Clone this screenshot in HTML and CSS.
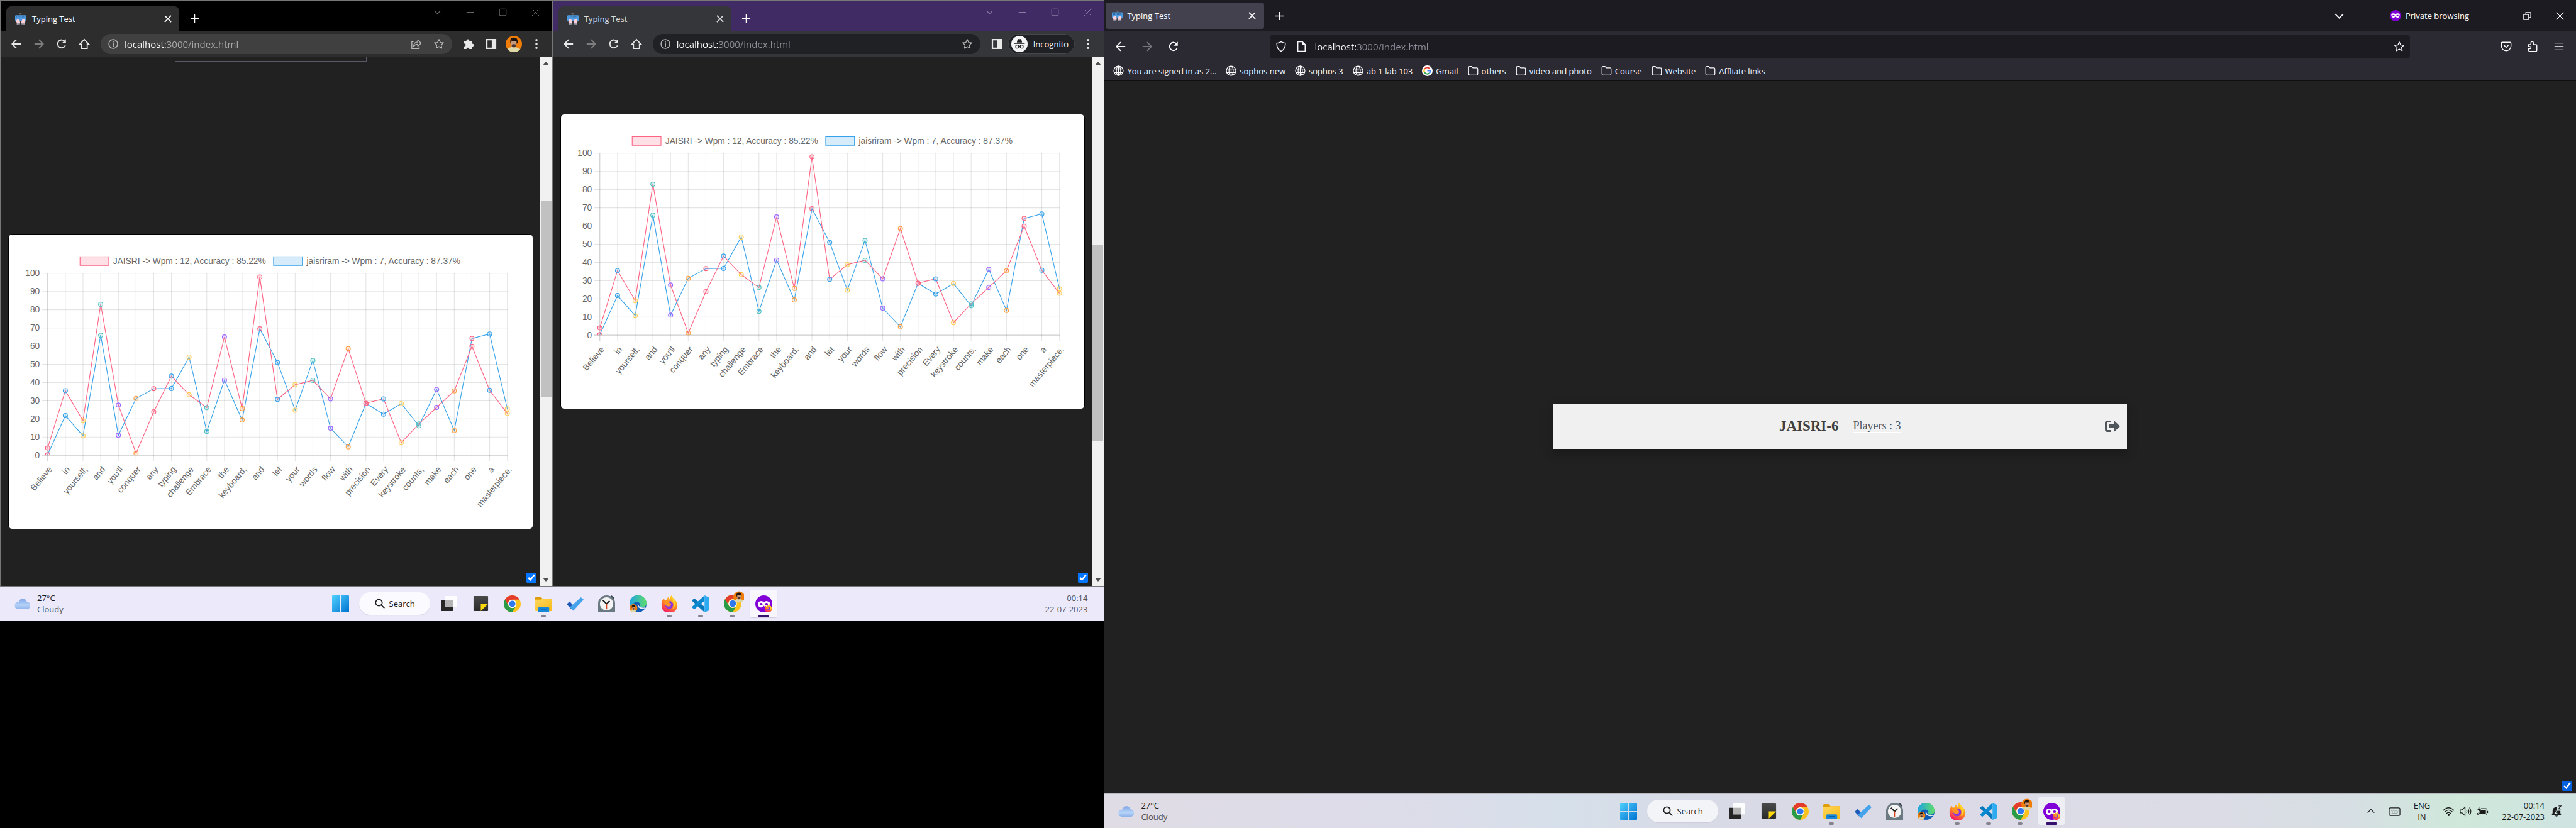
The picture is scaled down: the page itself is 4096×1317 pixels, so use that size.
FILE: index.html
```html
<!DOCTYPE html>
<html lang="en">
<head>
<meta charset="utf-8">
<title>Typing Test</title>
<link rel="stylesheet" href="styles.css">
</head>
<body>
<svg class="sprite" aria-hidden="true">
  <defs>
    <linearGradient id="g-cloud" x1="0" y1="0" x2="0" y2="1"><stop offset="0" stop-color="#7fa6e8"/><stop offset=".6" stop-color="#b5d3f8"/><stop offset="1" stop-color="#8fb2ea"/></linearGradient>
    <linearGradient id="g-win" x1="0" y1="0" x2="1" y2="1"><stop offset="0" stop-color="#4fd0ff"/><stop offset="1" stop-color="#0072d0"/></linearGradient>
    <linearGradient id="g-edge" x1="0" y1="0" x2="1" y2="0"><stop offset="0" stop-color="#1fa3e4"/><stop offset="1" stop-color="#5fdc6b"/></linearGradient>
    <linearGradient id="g-fox" x1=".8" y1="0" x2=".3" y2="1"><stop offset="0" stop-color="#ffe226"/><stop offset=".5" stop-color="#ff8a1e"/><stop offset="1" stop-color="#f5156c"/></linearGradient>
    <linearGradient id="g-folder" x1="0" y1="0" x2="1" y2="1"><stop offset="0" stop-color="#ffd75e"/><stop offset="1" stop-color="#fbb917"/></linearGradient>
    <linearGradient id="g-dark" x1="0" y1="0" x2="0" y2="1"><stop offset="0" stop-color="#4a4a4a"/><stop offset="1" stop-color="#2a2a2a"/></linearGradient>
  </defs>
  <symbol id="i-favicon" viewBox="0 0 20 20"><path d="M10 4V2.500q0-1 1-1h2M7 0.800h4" fill="none" stroke="#777" stroke-width="1"/><rect x="0" y="3.500" width="20" height="11" rx="1.500" fill="#4f9be0"/><path d="M2 5.500h16M2 8h16M2 10.500h16" stroke="#23588f" stroke-width="1.200" stroke-dasharray="1.500 1"/><path d="M3 20v-3l-1.500-3 2.500-4 1.500 1 2 .5 1.500 4-1 4.500zM17 20v-3l1.500-3-2.500-4-1.500 1-2 .5-1.500 4 1 4.500z" fill="#fbd0d8"/><path d="M3.500 18h4.500v2H3.500zM12 18h4.500v2H12z" fill="#7d8790"/></symbol>
  <symbol id="i-close" viewBox="0 0 16 16"><path d="M3.500 3.500l9 9M12.500 3.500l-9 9" stroke="currentColor" stroke-width="1.500" fill="none"/></symbol>
  <symbol id="i-plus" viewBox="0 0 16 16"><path d="M8 1v14M1 8h14" stroke="currentColor" stroke-width="1.600"/></symbol>
  <symbol id="i-down" viewBox="0 0 16 16"><path d="M2 5l6 6 6-6" fill="none" stroke="currentColor" stroke-width="1.600"/></symbol>
  <symbol id="i-up" viewBox="0 0 16 16"><path d="M2 11l6-6 6 6" fill="none" stroke="currentColor" stroke-width="1.600"/></symbol>
  <symbol id="i-min" viewBox="0 0 16 16"><path d="M1 8h14" stroke="currentColor" stroke-width="1.300"/></symbol>
  <symbol id="i-max" viewBox="0 0 16 16"><rect x="1.500" y="1.500" width="13" height="13" rx="2" fill="none" stroke="currentColor" stroke-width="1.300"/></symbol>
  <symbol id="i-restore" viewBox="0 0 16 16"><path d="M2 5.500h8.500V14H2zM5.500 5.500V2H14v8.500h-3.500" fill="none" stroke="currentColor" stroke-width="1.400"/></symbol>
  <symbol id="i-x" viewBox="0 0 16 16"><path d="M1 1l14 14M15 1L1 15" stroke="currentColor" stroke-width="1.200"/></symbol>
  <symbol id="i-back" viewBox="0 0 20 20"><path d="M18 10H3M10 2.500L2.500 10l7.500 7.500" fill="none" stroke="currentColor" stroke-width="2"/></symbol>
  <symbol id="i-fwd" viewBox="0 0 20 20"><path d="M2 10h15M10 2.500l7.500 7.500-7.500 7.500" fill="none" stroke="currentColor" stroke-width="2"/></symbol>
  <symbol id="i-reload" viewBox="0 0 20 20"><path d="M16.500 12.500A7 7 0 1 1 15.500 5.500" fill="none" stroke="currentColor" stroke-width="2.100"/><path d="M17.500 1.500v7h-7z" fill="currentColor"/></symbol>
  <symbol id="i-home" viewBox="0 0 20 20"><path d="M2 10.500L10 2l8 8.500h-2.800V18H4.800v-7.500z" fill="none" stroke="currentColor" stroke-width="1.900"/></symbol>
  <symbol id="i-info" viewBox="0 0 20 20"><circle cx="10" cy="10" r="7.700" fill="none" stroke="currentColor" stroke-width="1.600"/><path d="M10 9v5.500M10 5.300v2" stroke="currentColor" stroke-width="2"/></symbol>
  <symbol id="i-share" viewBox="0 0 20 20"><path d="M5 6H2v12h13v-4" fill="none" stroke="currentColor" stroke-width="1.500"/><path d="M5 14c.5-5 3-7.500 7.500-7.500V3l6 5.500-6 5.500v-3.500C9 10.500 7 11.500 5 14z" fill="none" stroke="currentColor" stroke-width="1.500" stroke-linejoin="round"/></symbol>
  <symbol id="i-star" viewBox="0 0 20 20"><path d="M10 2l2.400 5.300 5.800.6-4.300 3.900 1.200 5.700L10 14.600l-5.100 2.900 1.200-5.700-4.300-3.900 5.800-.6z" fill="none" stroke="currentColor" stroke-width="1.500" stroke-linejoin="round"/></symbol>
  <symbol id="i-puzzle" viewBox="0 0 20 20"><path d="M1.500 5h4.800a2.600 2.600 0 1 1 5 0H16v4.600a2.600 2.600 0 1 1 0 5V19h-4.700a2.500 2.500 0 1 0-5 0H1.500v-5a2.500 2.500 0 1 0 0-4.500z" fill="currentColor"/></symbol>
  <symbol id="i-panel" viewBox="0 0 20 20"><path d="M1 1h18v18H1zM3.500 3.500v13H11v-13z" fill="currentColor" fill-rule="evenodd"/></symbol>
  <symbol id="i-avatar" viewBox="0 0 28 28"><circle cx="14" cy="14" r="14" fill="#ef7d08"/><path d="M3 22.500q4-3 7.500-3.500h6q5 1 8.500 4A14 14 0 0 1 3 22.500z" fill="#ddd8a8"/><path d="M9.500 9h9v7q-1.500 5-4.500 5t-4.500-5z" fill="#c79a80"/><path d="M8 12Q6.500 3 14 3t6.500 9l-1.500 2-.5-5q-5 1-8.500-1l-.5 6z" fill="#191412"/><path d="M10.500 15q3.500-1.500 7 0v3q-3.500 3-7 0z" fill="#4b352c"/></symbol>
  <symbol id="i-dots" viewBox="0 0 20 20"><g fill="currentColor"><circle cx="10" cy="3" r="2"/><circle cx="10" cy="10" r="2"/><circle cx="10" cy="17" r="2"/></g></symbol>
  <symbol id="i-incog" viewBox="0 0 28 28"><circle cx="14" cy="14" r="14" fill="#f4f4f6"/><path d="M9.500 11.500l1.500-6q3 .8 6 0l1.500 6z" fill="#202124"/><path d="M5 13h18" stroke="#202124" stroke-width="1.600"/><g fill="none" stroke="#202124" stroke-width="1.300"><circle cx="10.200" cy="18.500" r="2.700"/><circle cx="17.800" cy="18.500" r="2.700"/><path d="M12.900 18q1.100-.8 2.200 0"/></g></symbol>
  <symbol id="i-shield" viewBox="0 0 20 20"><path d="M10 1.500q3.500 2.500 7.500 2.500.5 10-7.500 14.500Q2 14 2.500 4 6.500 4 10 1.500z" fill="none" stroke="currentColor" stroke-width="1.600"/></symbol>
  <symbol id="i-page" viewBox="0 0 20 20"><path d="M4 1.500h8l5 5v12H4z" fill="none" stroke="currentColor" stroke-width="1.800" stroke-linejoin="round"/><path d="M11.500 1.500V7H17z" fill="currentColor"/></symbol>
  <symbol id="i-globe" viewBox="0 0 20 20"><g fill="none" stroke="currentColor" stroke-width="1.500"><circle cx="10" cy="10" r="8.800"/><ellipse cx="10" cy="10" rx="4" ry="8.800"/><path d="M2 6.500h16M2 13.500h16M10 1v18"/></g></symbol>
  <symbol id="i-google" viewBox="0 0 20 20"><circle cx="10" cy="10" r="10" fill="#fff"/><g fill="none" stroke-width="2.600"><path d="M14.200 5.800A6 6 0 0 0 4.800 7" stroke="#ea4335"/><path d="M4.800 7a6 6 0 0 0 0 6" stroke="#fbbc05"/><path d="M4.800 13a6 6 0 0 0 9 1.600" stroke="#34a853"/><path d="M13.800 14.600A6 6 0 0 0 16 10h-6" stroke="#4285f4"/></g></symbol>
  <symbol id="i-folder" viewBox="0 0 20 20"><path d="M1.500 4q0-2 2-2h3.500l2.500 2.500h7q2 0 2 2V16q0 2-2 2h-13q-2 0-2-2z" fill="none" stroke="currentColor" stroke-width="1.500"/></symbol>
  <symbol id="i-pocket" viewBox="0 0 20 20"><path d="M3 2.500h14q1.500 0 1.500 1.500v5a8.500 8.500 0 0 1-17 0V4q0-1.500 1.500-1.500z" fill="none" stroke="currentColor" stroke-width="1.600"/><path d="M6 7.500l4 4 4-4" fill="none" stroke="currentColor" stroke-width="1.700"/></symbol>
  <symbol id="i-ext" viewBox="0 0 20 20"><path d="M3 6.500h4V3.500a2.200 2.200 0 0 1 4.400 0v3H16q1.500 0 1.500 1.500v9q0 1.500-1.500 1.500H4.500Q3 18.500 3 17v-3h2a2 2 0 0 0 0-4H3z" fill="none" stroke="currentColor" stroke-width="1.600"/></symbol>
  <symbol id="i-menu" viewBox="0 0 20 20"><path d="M2 4h16M2 10h16M2 16h16" stroke="currentColor" stroke-width="1.600"/></symbol>
  <symbol id="i-mask" viewBox="0 0 20 20"><circle cx="10" cy="10" r="10" fill="#8000d7"/><path d="M2.500 7.500Q6 4.500 10 7q4-2.500 7.500.5 0 6-4 6-2 0-3.500-2-1.500 2-3.500 2-4 0-4-6z" fill="#fff"/><ellipse cx="6.500" cy="9.700" rx="1.900" ry="1.200" fill="#8000d7"/><ellipse cx="13.500" cy="9.700" rx="1.900" ry="1.200" fill="#8000d7"/></symbol>
  <symbol id="i-exit" viewBox="0 0 24 18"><path d="M9 1.500H4Q1.500 1.500 1.500 4v10q0 2.500 2.500 2.500h5" fill="none" stroke="currentColor" stroke-width="3"/><path d="M7 6h7V1q0-1 1-.5l8.300 7.800q.7.700 0 1.400L15 17.500q-1 .5-1-.5v-5H7z" fill="currentColor"/></symbol>
  <symbol id="i-cloud" viewBox="0 0 28 18"><path d="M6 18a6 6 0 0 1-.5-11.500Q7 7 8 6A6.500 6.500 0 0 1 20.500 6 6.200 6.200 0 0 1 22 18z" fill="url(#g-cloud)"/></symbol>
  <symbol id="i-win" viewBox="0 0 27 27"><path d="M1 0h12v13H0V1q0-1 1-1zM14 0h12q1 0 1 1v12H14zM0 14h13v13H1q-1 0-1-1zM14 14h13v12q0 1-1 1H14z" fill="url(#g-win)"/></symbol>
  <symbol id="i-search" viewBox="0 0 16 16"><circle cx="6.500" cy="6.500" r="5.200" fill="none" stroke="currentColor" stroke-width="1.700"/><path d="M10.300 10.300l5 5" stroke="currentColor" stroke-width="1.900"/></symbol>
  <symbol id="i-task" viewBox="0 0 28 28"><rect x="0" y="8" width="20" height="18" rx="1" fill="#262626"/><rect x="7" y="1" width="20" height="18" rx="1" fill="#fff" opacity=".9"/><path d="M7 8h13v11H7z" fill="#b4b4b4"/></symbol>
  <symbol id="i-note" viewBox="0 0 28 28"><rect x="2" y="1" width="24" height="25" rx="1" fill="url(#g-dark)"/><path d="M14 26V14h12z" fill="#ffd90a"/></symbol>
  <symbol id="i-chrome" viewBox="0 0 28 28"><circle cx="14" cy="14" r="14" fill="#fcc31e"/><path d="M1.900 7A14 14 0 0 1 26.100 7H14a7 7 0 0 0-6 10.500z" fill="#e33b2e"/><path d="M1.900 7A14 14 0 0 0 14 28l6-10.500a7 7 0 0 1-12 0z" fill="#2a9c48"/><circle cx="14" cy="14" r="6.800" fill="#fff"/><circle cx="14" cy="14" r="5.300" fill="#2d78ee"/></symbol>
  <symbol id="i-explorer" viewBox="0 0 28 28"><path d="M0 4q0-2 2-2h7l3 3.500h14q2 0 2 2V12H0z" fill="#df9d0c"/><path d="M0 7h9l3-1.500h15q1 0 1 1V24q0 2-2 2H2q-2 0-2-2z" fill="url(#g-folder)"/><path d="M5 27v-6q0-2 2-2h14q2 0 2 2v6z" fill="#1787d8"/><path d="M9 22.500h10" stroke="#0b5ca8" stroke-width="1.500"/></symbol>
  <symbol id="i-todo" viewBox="0 0 28 28"><path d="M0 14.500l5-4.500 6.500 7-4 5.500z" fill="#1c59b8"/><path d="M5.500 19.500L23.500 3l4.500 4-17 18.500z" fill="#45a3ec"/></symbol>
  <symbol id="i-clock" viewBox="0 0 28 28"><path d="M22 0l5 4-2 3-5-4z" fill="#37424b"/><path d="M0 28V13a14 13 0 0 1 28 0v15z" fill="#6b7982"/><circle cx="14" cy="14" r="11" fill="#f4f4f4"/><path d="M8 8l6 6 5-5" fill="none" stroke="#222" stroke-width="2.200"/><path d="M14 14v9" stroke="#d9431f" stroke-width="1.700"/></symbol>
  <symbol id="i-edge" viewBox="0 0 28 28"><circle cx="14" cy="14" r="14" fill="#0f5cb5"/><path d="M0 14A14 14 0 0 1 28 13q0 6-7 6.500-5 0-4-3 1-5-4.500-5.500Q5 11 3 20 0 17 0 14z" fill="url(#g-edge)"/><path d="M14 12.500q-2 4 1 7.500 4 3 10 1.500l1-1.500q-5 .5-8-.5-4-2-4-7z" fill="#ece9fb"/><use href="#i-avatar" x="0" y="14" width="13" height="14"/></symbol>
  <symbol id="i-fox" viewBox="0 0 28 28"><path d="M17 0q2 4 5 6.500 6 5 5 11A13 12 0 0 1 1 17Q0 9 5 5l1 3 3-.5Q10 4 12 2.500L14 7q1-5 3-7z" fill="url(#g-fox)"/><circle cx="13.500" cy="15.500" r="6.500" fill="#8a35e2"/><path d="M5 10q5-3 10 0l-3 2.500q5-1 4.500 3-1 3.500-6 2.500-4-1-5.500-8z" fill="#ff9520"/><path d="M18 3q1 7 3 10 1 6-2 9 7-3 5-12-1-4-6-7z" fill="#ffd22c"/></symbol>
  <symbol id="i-code" viewBox="0 0 28 28"><path d="M0 7.500L3 5l17 14v9L0 9.500q-.7-1 0-2z" fill="#0878bd"/><path d="M0 20.500L3 23l17-14V0L0 18.500q-.7 1 0 2z" fill="#0a89d3"/><path d="M20 0l8 3.500v21L20 28z" fill="#2cabf1"/></symbol>
  <symbol id="i-profile" viewBox="0 0 32 34"><use href="#i-chrome" x="0" y="6" width="28" height="28"/><use href="#i-avatar" x="15" y="0" width="18" height="19"/></symbol>
  <symbol id="i-private" viewBox="0 0 28 28"><ellipse cx="14" cy="14" rx="14" ry="14" fill="#8000d7"/><path d="M4 12q5-5 10-1 5-4 10 1 0 8-5 8-3 0-5-3-2 3-5 3-5 0-5-8z" fill="#fff"/><ellipse cx="9.500" cy="14.500" rx="2.500" ry="2" fill="#8000d7"/><ellipse cx="18.500" cy="14.500" rx="2.500" ry="2" fill="#8000d7"/><use href="#i-fox" x="15" y="14" width="13" height="14"/></symbol>
  <symbol id="i-keys" viewBox="0 0 20 20"><rect x="1" y="4" width="18" height="13" rx="2" fill="none" stroke="currentColor" stroke-width="1.300"/><path d="M4 8h13M5.500 11h10" stroke="currentColor" stroke-width="1.500" stroke-dasharray="1.500 1.500"/><path d="M5 14h10" stroke="currentColor" stroke-width="1.200"/></symbol>
  <symbol id="i-wifi" viewBox="0 0 20 20"><g fill="none" stroke="currentColor" stroke-width="1.400"><path d="M1 8.500q9-9 18 0M3.500 11q6.500-6.500 13 0M6.200 13.600q3.800-3.600 7.600 0"/></g><circle cx="10" cy="16" r="1.800" fill="currentColor"/></symbol>
  <symbol id="i-vol" viewBox="0 0 20 20"><g fill="none" stroke="currentColor" stroke-width="1.300"><path d="M1 7.500h3L9 3v14l-5-4.500H1z"/><path d="M11.500 7.500q1.500 2.500 0 5M14 5.500q3 4.500 0 9M16.500 3.500q4.500 6.500 0 13"/></g></symbol>
  <symbol id="i-batt" viewBox="0 0 22 20"><path d="M8 5h9q2 0 2 2v8q0 2-2 2H4q-2 0-2-2v-2" fill="none" stroke="currentColor" stroke-width="1.300"/><path d="M8 7h9v8H4l1-2z" fill="currentColor"/><path d="M19 9h2v4h-2zM5 1L1 8h3l-1 5 5-7H5z" fill="currentColor"/></symbol>
  <symbol id="i-bell" viewBox="0 0 20 20"><path d="M2 16q2-1 2-4V9q0-6 7-6.500V9h6v3q0 3 2 4zM8 17h5q-2.500 3.500-5 0z" fill="currentColor"/><path d="M8 8h4l-4 5h4" fill="none" stroke="#cfe5dd" stroke-width="1.200"/><path d="M14 1h4l-4 5h4" fill="none" stroke="currentColor" stroke-width="1.300"/></symbol>
</svg>

<div class="desk">
  <section class="monitor monitor-left">
    <div class="windows">
      <article class="chrome">
        <header>
          <div class="tabstrip">
            <div class="tab"><svg class="fav"><use href="#i-favicon"/></svg><span class="tab-title">Typing Test</span><button class="tab-close" aria-label="Close tab"><svg><use href="#i-close"/></svg></button></div>
            <button class="new-tab" aria-label="New tab"><svg><use href="#i-plus"/></svg></button>
            <div class="controls">
              <button aria-label="Search tabs"><svg><use href="#i-down"/></svg></button><button aria-label="Minimize"><svg><use href="#i-min"/></svg></button><button aria-label="Maximize"><svg><use href="#i-max"/></svg></button><button aria-label="Close"><svg><use href="#i-x"/></svg></button>
            </div>
          </div>
          <div class="toolbar">
            <button aria-label="Back"><svg><use href="#i-back"/></svg></button><button class="dim" aria-label="Forward"><svg><use href="#i-fwd"/></svg></button><button aria-label="Reload"><svg><use href="#i-reload"/></svg></button><button aria-label="Home"><svg><use href="#i-home"/></svg></button>
            <div class="omnibox"><svg><use href="#i-info"/></svg><input class="url" type="text" aria-label="Address" value="localhost:3000/index.html"><button aria-label="Share"><svg><use href="#i-share"/></svg></button><button aria-label="Bookmark"><svg><use href="#i-star"/></svg></button></div>
            <button aria-label="Extensions"><svg><use href="#i-puzzle"/></svg></button><button aria-label="Side panel"><svg><use href="#i-panel"/></svg></button><button class="profile" aria-label="Profile"><svg><use href="#i-avatar"/></svg></button><button aria-label="Menu"><svg><use href="#i-dots"/></svg></button>
          </div>
        </header>
        <div class="view">
          <main class="page">
            <div class="field-edge"></div>
            <div class="card card-low"><svg class="chart" role="img" aria-label="Words per minute by word"></svg></div>
            <input class="tick" type="checkbox" checked aria-label="Auto scroll">
          </main>
          <div class="scroll"><i class="arrow up"></i><div class="track"><div class="thumb thumb-a"></div></div><i class="arrow down"></i></div>
        </div>
      </article>

      <article class="chrome incognito">
        <header>
          <div class="tabstrip">
            <div class="tab"><svg class="fav"><use href="#i-favicon"/></svg><span class="tab-title">Typing Test</span><button class="tab-close" aria-label="Close tab"><svg><use href="#i-close"/></svg></button></div>
            <button class="new-tab" aria-label="New tab"><svg><use href="#i-plus"/></svg></button>
            <div class="controls">
              <button aria-label="Search tabs"><svg><use href="#i-down"/></svg></button><button aria-label="Minimize"><svg><use href="#i-min"/></svg></button><button aria-label="Maximize"><svg><use href="#i-max"/></svg></button><button aria-label="Close"><svg><use href="#i-x"/></svg></button>
            </div>
          </div>
          <div class="toolbar">
            <button aria-label="Back"><svg><use href="#i-back"/></svg></button><button class="dim" aria-label="Forward"><svg><use href="#i-fwd"/></svg></button><button aria-label="Reload"><svg><use href="#i-reload"/></svg></button><button aria-label="Home"><svg><use href="#i-home"/></svg></button>
            <div class="omnibox"><svg><use href="#i-info"/></svg><input class="url" type="text" aria-label="Address" value="localhost:3000/index.html"><button aria-label="Bookmark"><svg><use href="#i-star"/></svg></button></div>
            <button aria-label="Side panel"><svg><use href="#i-panel"/></svg></button><button class="pill"><svg><use href="#i-incog"/></svg>Incognito</button><button aria-label="Menu"><svg><use href="#i-dots"/></svg></button>
          </div>
        </header>
        <div class="view">
          <main class="page">
            <div class="card card-high"><svg class="chart" role="img" aria-label="Words per minute by word"></svg></div>
            <input class="tick" type="checkbox" checked aria-label="Auto scroll">
          </main>
          <div class="scroll"><i class="arrow up"></i><div class="track"><div class="thumb thumb-b"></div></div><i class="arrow down"></i></div>
        </div>
      </article>
    </div>

    <footer class="taskbar">
      <button class="weather"><svg><use href="#i-cloud"/></svg><span>27°C<br><small>Cloudy</small></span></button>
      <nav class="apps">
        <button class="app" aria-label="Start"><svg><use href="#i-win"/></svg></button>
        <button class="find"><svg><use href="#i-search"/></svg>Search</button>
        <button class="app" aria-label="Task view"><svg><use href="#i-task"/></svg></button>
        <button class="app" aria-label="Sticky notes"><svg><use href="#i-note"/></svg></button>
        <button class="app" aria-label="Chrome"><svg><use href="#i-chrome"/></svg></button>
        <button class="app open" aria-label="Explorer"><svg><use href="#i-explorer"/></svg></button>
        <button class="app" aria-label="To do"><svg><use href="#i-todo"/></svg></button>
        <button class="app" aria-label="Clock"><svg><use href="#i-clock"/></svg></button>
        <button class="app" aria-label="Edge"><svg><use href="#i-edge"/></svg></button>
        <button class="app open" aria-label="Firefox"><svg><use href="#i-fox"/></svg></button>
        <button class="app open" aria-label="Code"><svg><use href="#i-code"/></svg></button>
        <button class="app open badge" aria-label="Chrome profile"><svg><use href="#i-profile"/></svg></button>
        <button class="app active" aria-label="Private browsing"><svg><use href="#i-private"/></svg></button>
      </nav>
      <div class="tray"><button class="stamp">00:14<br>22-07-2023</button></div>
    </footer>
  </section>

  <section class="monitor monitor-right">
    <article class="firefox">
      <header>
        <div class="fx-tabs">
          <div class="fx-tab"><svg class="fav"><use href="#i-favicon"/></svg><span class="tab-title">Typing Test</span><button class="tab-close" aria-label="Close tab"><svg><use href="#i-close"/></svg></button></div>
          <button class="new-tab" aria-label="New tab"><svg><use href="#i-plus"/></svg></button>
          <div class="fx-controls">
            <button class="list" aria-label="List tabs"><svg><use href="#i-down"/></svg></button>
            <span class="private"><svg><use href="#i-mask"/></svg>Private browsing</span>
            <button aria-label="Minimize"><svg><use href="#i-min"/></svg></button><button aria-label="Restore"><svg class="big"><use href="#i-restore"/></svg></button><button aria-label="Close"><svg><use href="#i-x"/></svg></button>
          </div>
        </div>
        <div class="fx-bar">
          <div class="fx-nav"><button aria-label="Back"><svg><use href="#i-back"/></svg></button><button class="dim" aria-label="Forward"><svg><use href="#i-fwd"/></svg></button><button aria-label="Reload"><svg><use href="#i-reload"/></svg></button></div>
          <div class="fx-url"><svg><use href="#i-shield"/></svg><svg><use href="#i-page"/></svg><input class="url" type="text" aria-label="Address" value="localhost:3000/index.html"><button aria-label="Bookmark"><svg><use href="#i-star"/></svg></button></div>
          <div class="fx-tools"><button aria-label="Pocket"><svg><use href="#i-pocket"/></svg></button><button aria-label="Extensions"><svg><use href="#i-ext"/></svg></button><button aria-label="Menu"><svg><use href="#i-menu"/></svg></button></div>
        </div>
        <nav class="marks">
          <a href="#"><svg><use href="#i-globe"/></svg>You are signed in as 2...</a>
          <a href="#"><svg><use href="#i-globe"/></svg>sophos new</a>
          <a href="#"><svg><use href="#i-globe"/></svg>sophos 3</a>
          <a href="#"><svg><use href="#i-globe"/></svg>ab 1 lab 103</a>
          <a href="#"><svg><use href="#i-google"/></svg>Gmail</a>
          <a href="#"><svg><use href="#i-folder"/></svg>others</a>
          <a href="#"><svg><use href="#i-folder"/></svg>video and photo</a>
          <a href="#"><svg><use href="#i-folder"/></svg>Course</a>
          <a href="#"><svg><use href="#i-folder"/></svg>Website</a>
          <a href="#"><svg><use href="#i-folder"/></svg>Affliate links</a>
        </nav>
      </header>
      <main class="lobby">
        <div class="room"><h1>JAISRI-6</h1><p>Players : 3</p><button aria-label="Leave room"><svg><use href="#i-exit"/></svg></button></div>
        <input class="tick" type="checkbox" checked aria-label="Auto scroll">
      </main>
    </article>
    <footer class="taskbar tinted">
      <button class="weather"><svg><use href="#i-cloud"/></svg><span>27°C<br><small>Cloudy</small></span></button>
      <nav class="apps">
        <button class="app" aria-label="Start"><svg><use href="#i-win"/></svg></button>
        <button class="find"><svg><use href="#i-search"/></svg>Search</button>
        <button class="app" aria-label="Task view"><svg><use href="#i-task"/></svg></button>
        <button class="app" aria-label="Sticky notes"><svg><use href="#i-note"/></svg></button>
        <button class="app" aria-label="Chrome"><svg><use href="#i-chrome"/></svg></button>
        <button class="app open" aria-label="Explorer"><svg><use href="#i-explorer"/></svg></button>
        <button class="app" aria-label="To do"><svg><use href="#i-todo"/></svg></button>
        <button class="app" aria-label="Clock"><svg><use href="#i-clock"/></svg></button>
        <button class="app" aria-label="Edge"><svg><use href="#i-edge"/></svg></button>
        <button class="app open" aria-label="Firefox"><svg><use href="#i-fox"/></svg></button>
        <button class="app open" aria-label="Code"><svg><use href="#i-code"/></svg></button>
        <button class="app open badge" aria-label="Chrome profile"><svg><use href="#i-profile"/></svg></button>
        <button class="app active" aria-label="Private browsing"><svg><use href="#i-private"/></svg></button>
      </nav>
      <div class="tray">
        <button aria-label="Hidden icons"><svg class="small"><use href="#i-up"/></svg></button>
        <button aria-label="Touch keyboard"><svg><use href="#i-keys"/></svg></button>
        <button class="lang">ENG<br>IN</button>
        <button class="status" aria-label="Network, sound and battery"><svg><use href="#i-wifi"/></svg><svg><use href="#i-vol"/></svg><svg><use href="#i-batt"/></svg></button>
        <button class="stamp">00:14<br>22-07-2023</button>
        <button class="bell" aria-label="Notifications"><svg><use href="#i-bell"/></svg></button>
      </div>
    </footer>
  </section>
</div>
<script src="chart.js"></script>
</body>
</html>
```
FILE: styles.css
```css
* { box-sizing: border-box; }

body {
  margin: 0;
  background: #000;
  color: #fff;
  font-family: "Open Sans", "Noto Sans", sans-serif;
  font-size: 13px;
}

button {
  display: flex;
  align-items: center;
  justify-content: center;
  padding: 0;
  border: 0;
  background: none;
  color: inherit;
  font: inherit;
}

svg { display: block; flex: none; }
.sprite { position: absolute; width: 0; height: 0; }

.desk { display: grid; grid-template-columns: 3fr 4fr; min-height: 100vh; }
.monitor { display: flex; flex-direction: column; min-width: 0; }
.monitor-left { height: 75vh; }
.monitor-right { height: 100vh; }
.windows { flex: 1; display: grid; grid-template-columns: 1fr 1fr; min-height: 0; }

/* Chrome windows */
.chrome {
  --frame: #000;
  --bar: #2d2d2d;
  --box: #404040;
  --muted: #a9a9a9;
  --ctl: #666;
  display: flex;
  flex-direction: column;
  min-width: 0;
  border: 1px solid #777;
  border-right: 0;
  background: #212121;
}
.incognito {
  --frame: #402b64;
  --bar: #35363a;
  --box: #202124;
  --muted: #8d9196;
  --ctl: #8a7ba3;
}
.tabstrip { display: flex; height: 48px; padding: 9px 0 0 9px; background: var(--frame); }
.tab {
  display: flex;
  align-items: center;
  width: 275px;
  padding: 0 9px 0 14px;
  border-radius: 8px 8px 0 0;
  background: var(--bar);
}
.incognito .tab { color: #dadce0; }
.fav { width: 18px; height: 18px; margin-right: 9px; }
.tab-title { flex: 1; }
.tab-close, .tab-close svg { width: 18px; height: 18px; }
.new-tab { width: 32px; margin-left: 8px; }
.new-tab svg { width: 15px; height: 15px; }
.controls { display: flex; height: 18px; margin-left: auto; color: var(--ctl); }
.controls button { width: 52px; }
.controls svg { width: 13px; height: 13px; }

.toolbar {
  display: flex;
  align-items: center;
  height: 42px;
  padding: 0 7px;
  background: var(--bar);
  border-bottom: 1px solid #5c5c5e;
  color: #e8e8e8;
}
.toolbar button { width: 36px; height: 32px; }
.toolbar svg { width: 18px; height: 18px; }
.toolbar .dim { color: #7d7d7d; }
.omnibox {
  flex: 1;
  display: flex;
  align-items: center;
  height: 32px;
  margin: 0 8px;
  padding: 0 3px 0 11px;
  border-radius: 16px;
  background: var(--box);
  color: #b9b9b9;
}
.url {
  flex: 1;
  min-width: 0;
  margin-left: 9px;
  padding: 0;
  border: 0;
  outline: 0;
  font: 15px "Open Sans", "Noto Sans", sans-serif;
  color: #fff;
  background: linear-gradient(90deg, #fff 68px, var(--muted) 68px);
  -webkit-background-clip: text;
  background-clip: text;
  -webkit-text-fill-color: transparent;
}
.toolbar .profile svg { width: 26px; height: 26px; }
.toolbar .pill {
  gap: 9px;
  width: 106px;
  margin-right: 3px;
  border: 1px solid #46474b;
  border-radius: 16px;
  background: #202124;
  color: #fff;
}
.toolbar .pill svg { width: 26px; height: 26px; margin-left: -6px; }

.view { flex: 1; display: flex; min-height: 0; }
.page { flex: 1; position: relative; min-width: 0; padding: 0 11px 0 12px; overflow: hidden; }
.field-edge {
  width: 305px;
  height: 7px;
  margin: 0 auto;
  border: 1px solid #5a5a66;
  border-top: 0;
}
.card { border: 1px solid #000; border-radius: 6px; background: #fff; overflow: hidden; }
.card-low { margin-top: 274px; }
.card-high { margin-top: 90px; }
.chart { width: 100%; height: auto; font: 12px "Liberation Sans", Arial, sans-serif; }
.chart text { fill: #666; }
.tick {
  position: absolute;
  right: 6px;
  bottom: 5px;
  width: 16px;
  height: 16px;
  margin: 0;
  accent-color: #0075ff;
}

.scroll { display: flex; flex-direction: column; width: 19px; background: #f1f1f1; }
.arrow { height: 20px; display: grid; place-items: center; }
.arrow::before { content: ""; border: 5px solid transparent; border-top: 0; border-bottom: 6px solid #505050; }
.down::before { transform: rotate(180deg); }
.track { flex: 1; padding: 0 1px; }
.thumb { height: 39%; background: #c1c1c1; }
.thumb-a { margin-top: 208px; }
.thumb-b { margin-top: 278px; }

/* Taskbars */
.taskbar {
  display: grid;
  grid-template-columns: 1fr auto 1fr;
  align-items: center;
  height: 55px;
  background: #ece9fb;
  color: #1b1b1b;
  line-height: 18px;
}
.tinted {
  border-top: 1px solid #b9b9c0;
  background: linear-gradient(90deg, #dfdce5 0%, #dddce9 20%, #d6e0ea 31%, #d8dae6 42%, #dbdae6 60%, #dcdce6 75%, #d6dfe3 85%, #cfe8da 92%, #cfe3e1 100%);
}
.weather { justify-self: start; gap: 9px; margin-left: 22px; text-align: left; }
.weather svg { width: 28px; height: 18px; }
.weather small { font-size: 13px; color: #555; }
.apps { display: flex; align-items: center; gap: 6px; }
.app { position: relative; width: 44px; height: 44px; border-radius: 4px; }
.app svg { width: 27px; height: 27px; }
.badge svg { width: 32px; height: 34px; margin: -6px -5px 0 0; }
.find {
  gap: 7px;
  width: 113px;
  height: 36px;
  margin: 0 2px;
  border-radius: 18px;
  background: #fbfaff;
  box-shadow: 0 1px 1px #cfcbdc;
}
.find svg { width: 16px; height: 16px; }
.tinted .find { background: #f3f4f7; }
.open::after, .active::after {
  content: "";
  position: absolute;
  bottom: 0;
  left: 50%;
  width: 8px;
  height: 4px;
  margin-left: -4px;
  border-radius: 2px;
  background: #85838d;
}
.active { background: #f8f6ff; box-shadow: 0 1px 1px #d2cede; }
.tinted .active { background: #eeeff5; }
.active::after { width: 18px; margin-left: -9px; background: #35106f; }
.tray { justify-self: end; display: flex; align-items: center; margin-right: 26px; }
.stamp { text-align: right; color: #555; }
.tray svg { width: 19px; height: 19px; }
.tray .small { width: 14px; height: 14px; }
.tinted .tray { margin-right: 22px; }
.tinted .tray button { margin-left: 21px; }
.tinted .tray .status { gap: 8px; margin-left: 20px; }
.tinted .tray .bell { margin-left: 9px; }
.tinted .stamp { color: #1b1b1b; }

/* Firefox window */
.firefox { flex: 1; display: flex; flex-direction: column; min-height: 0; color: #fbfbfe; }
.fx-tabs { display: flex; align-items: center; height: 50px; padding: 0 0 0 3px; background: #1c1b22; }
.fx-tab {
  display: flex;
  align-items: center;
  width: 252px;
  height: 42px;
  padding: 0 10px;
  border-radius: 4px;
  background: #42414d;
}
.fx-tab .fav { width: 17px; margin-right: 7px; }
.fx-controls { display: flex; align-items: center; margin-left: auto; }
.fx-controls button { width: 52px; height: 40px; }
.fx-controls svg { width: 13px; height: 13px; }
.fx-controls .big { width: 15px; height: 15px; }
.fx-controls .list svg { width: 17px; height: 17px; }
.private { display: flex; align-items: center; gap: 7px; margin: 0 14px 0 54px; }
.private svg { width: 18px; height: 18px; }
.fx-bar { display: flex; align-items: center; height: 47px; background: #2b2a33; }
.fx-bar svg { width: 18px; height: 18px; }
.fx-nav { display: flex; width: 264px; padding-left: 6px; }
.fx-nav button, .fx-tools button { width: 42px; height: 36px; }
.fx-nav .dim { color: #77767e; }
.fx-url {
  --muted: #8f8f9a;
  flex: 1;
  display: flex;
  align-items: center;
  height: 36px;
  padding: 0 8px 0 9px;
  border-radius: 4px;
  background: #1c1b22;
}
.fx-url svg + svg { margin-left: 14px; }
.fx-url .url { margin-left: 12px; }
.fx-tools { display: flex; justify-content: end; width: 264px; padding-right: 6px; }
.marks {
  display: flex;
  align-items: center;
  gap: 15px;
  height: 32px;
  padding: 0 15px;
  background: #2b2a33;
  border-bottom: 1px solid #0f0f12;
}
.marks a { display: flex; align-items: center; gap: 5px; color: inherit; text-decoration: none; white-space: nowrap; }
.marks svg { width: 17px; height: 17px; }
.lobby { flex: 1; position: relative; padding-top: 513px; background: #212121; }
.lobby .tick { accent-color: #0060df; bottom: 4px; }
.room {
  display: grid;
  grid-template-columns: 1fr auto auto 1fr;
  align-items: center;
  gap: 23px;
  width: 39%;
  height: 72px;
  margin: 0 auto;
  padding: 0 11px;
  background: #f0f0f0;
  color: #4f565c;
  box-shadow: 0 8px 12px #1a1a1a;
  font-family: "Liberation Serif", "Times New Roman", serif;
}
.room h1 { grid-column: 2; margin: 0; color: #404040; font-size: 23px; line-height: 26px; }
.room p { margin: 0; border-bottom: 2px solid #fff; font-size: 18px; line-height: 20px; }
.room button { justify-self: end; }
.room svg { width: 24px; height: 18px; }
```
FILE: chart.js
```js
const labels = ["Believe", "in", "yourself,", "and", "you'll", "conquer", "any", "typing", "challenge", "Embrace", "the", "keyboard,", "and", "let", "your", "words", "flow", "with", "precision", "Every", "keystroke", "counts,", "make", "each", "one", "a", "masterpiece."];
const palette = ["255,99,132", "54,162,235", "255,206,86", "75,192,192", "153,102,255", "255,159,64"];
const series = [
  { name: "JAISRI -> Wpm : 12, Accuracy : 85.22%", color: palette[0], keyX: 99,
    values: [4, 35.5, 19, 83, 27.6, 1.1, 23.9, 43.5, 33.3, 26.2, 65, 25.7, 98, 30.7, 38.8, 41.2, 31, 58.6, 28.6, 31, 6.9, 17.2, 26.3, 35.4, 59.9, 35.7, 23] },
  { name: "jaisriram -> Wpm : 7, Accuracy : 87.37%", color: palette[1], keyX: 368,
    values: [0.3, 21.8, 10.7, 66, 11, 31.2, 36.6, 36.7, 54, 13.1, 41.3, 19.4, 69.5, 51, 24.8, 52.1, 14.9, 4.6, 28.5, 22.6, 28.4, 16.2, 36.2, 13.6, 64.2, 66.7, 25.5] }
];

const area = { left: 54, right: 693, top: 54, bottom: 307 };
const x = i => area.left + i * (area.right - area.left) / (labels.length - 1);
const y = v => area.bottom - v * (area.bottom - area.top) / 100;

function line(x1, y1, x2, y2, alpha) {
  return `<line x1="${x1}" y1="${y1}" x2="${x2}" y2="${y2}" stroke="rgba(0,0,0,${alpha})"/>`;
}

function draw(svg, n) {
  let out = `<clipPath id="area${n}"><rect x="48" y="48" width="652" height="${area.bottom - 48}"/></clipPath>`;
  for (let v = 0; v <= 100; v += 10) {
    out += line(area.left - 8, y(v), area.right, y(v), v ? 0.1 : 0.2);
    out += `<text x="43" y="${y(v) + 4}" text-anchor="end">${v}</text>`;
  }
  labels.forEach((word, i) => {
    out += line(x(i), area.top, x(i), area.bottom + 8, i ? 0.1 : 0.2);
    out += `<text transform="translate(${x(i) + 7} ${area.bottom + 20}) rotate(-50)" text-anchor="end">${word}</text>`;
  });
  [...series].reverse().forEach(s => {
    const points = s.values.map((v, i) => `${x(i)},${y(v)}`).join(" ");
    out += `<g clip-path="url(#area${n})"><polyline points="${points}" fill="none" stroke="rgb(${s.color})"/>`;
    s.values.forEach((v, i) => {
      const c = palette[i % palette.length];
      out += `<circle cx="${x(i)}" cy="${y(v)}" r="3" fill="rgba(${c},.2)" stroke="rgb(${c})"/>`;
    });
    out += "</g>";
    out += `<rect x="${s.keyX}" y="31" width="40" height="12" fill="rgba(${s.color},.2)" stroke="rgb(${s.color})"/>`;
    out += `<text x="${s.keyX + 46}" y="41">${s.name.replace(">", "&gt;")}</text>`;
  });
  svg.setAttribute("viewBox", "0 0 728 409");
  svg.innerHTML = out;
}

document.querySelectorAll(".chart").forEach(draw);
```
